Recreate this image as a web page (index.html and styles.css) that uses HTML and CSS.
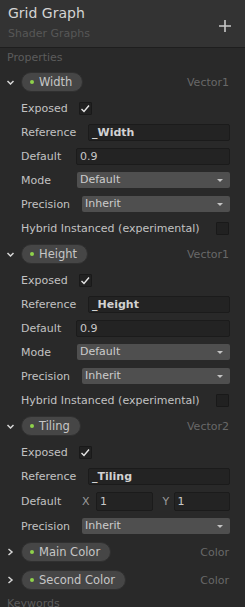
FILE: index.html
```html
<!DOCTYPE html>
<html lang="en">
<head>
  <meta charset="UTF-8">
  <meta name="viewport" content="width=device-width, initial-scale=1.0">
  <title>Grid Graph</title>
  <link rel="stylesheet" href="styles.css">
</head>
<body>
  <div class="panel">
    <header class="head">
      <div class="titles">
        <div class="title">Grid Graph</div>
        <div class="subtitle">Shader Graphs</div>
      </div>
      <svg class="add" width="12" height="12" viewBox="0 0 12 12"><path d="M6 0V12M0 6H12" stroke="#c8c8c8" stroke-width="1.6"/></svg>
    </header>

    <div class="section">Properties</div>

    <!-- Width -->
    <div class="prop">
      <div class="prop-head">
        <svg class="chev" width="8" height="5" viewBox="0 0 8 5"><path d="M1 1L4 4L7 1" fill="none" stroke="#d6d6d6" stroke-width="1.5"/></svg>
        <div class="pill"><span class="dot"></span>Width</div>
        <span class="type">Vector1</span>
      </div>
      <div class="row">
        <span class="lbl">Exposed</span>
        <span class="check on"><svg width="11" height="11" viewBox="0 0 11 11"><path d="M1.5 6L4 8.5L9 2.5" fill="none" stroke="#e6e6e6" stroke-width="1.4"/></svg></span>
      </div>
      <div class="row">
        <span class="lbl lbl-ref">Reference</span>
        <div class="field bold">_Width</div>
      </div>
      <div class="row">
        <span class="lbl lbl-def">Default</span>
        <div class="field">0.9</div>
      </div>
      <div class="row">
        <span class="lbl lbl-mode">Mode</span>
        <div class="drop">Default<span class="arrow"></span></div>
      </div>
      <div class="row">
        <span class="lbl lbl-prec">Precision</span>
        <div class="drop">Inherit<span class="arrow"></span></div>
      </div>
      <div class="row">
        <span class="lbl">Hybrid Instanced (experimental)</span>
        <span class="check end"></span>
      </div>
    </div>

    <!-- Height -->
    <div class="prop">
      <div class="prop-head">
        <svg class="chev" width="8" height="5" viewBox="0 0 8 5"><path d="M1 1L4 4L7 1" fill="none" stroke="#d6d6d6" stroke-width="1.5"/></svg>
        <div class="pill"><span class="dot"></span>Height</div>
        <span class="type">Vector1</span>
      </div>
      <div class="row">
        <span class="lbl">Exposed</span>
        <span class="check on"><svg width="11" height="11" viewBox="0 0 11 11"><path d="M1.5 6L4 8.5L9 2.5" fill="none" stroke="#e6e6e6" stroke-width="1.4"/></svg></span>
      </div>
      <div class="row">
        <span class="lbl lbl-ref">Reference</span>
        <div class="field bold">_Height</div>
      </div>
      <div class="row">
        <span class="lbl lbl-def">Default</span>
        <div class="field">0.9</div>
      </div>
      <div class="row">
        <span class="lbl lbl-mode">Mode</span>
        <div class="drop">Default<span class="arrow"></span></div>
      </div>
      <div class="row">
        <span class="lbl lbl-prec">Precision</span>
        <div class="drop">Inherit<span class="arrow"></span></div>
      </div>
      <div class="row">
        <span class="lbl">Hybrid Instanced (experimental)</span>
        <span class="check end"></span>
      </div>
    </div>

    <!-- Tiling -->
    <div class="prop">
      <div class="prop-head">
        <svg class="chev" width="8" height="5" viewBox="0 0 8 5"><path d="M1 1L4 4L7 1" fill="none" stroke="#d6d6d6" stroke-width="1.5"/></svg>
        <div class="pill"><span class="dot"></span>Tiling</div>
        <span class="type">Vector2</span>
      </div>
      <div class="row">
        <span class="lbl">Exposed</span>
        <span class="check on"><svg width="11" height="11" viewBox="0 0 11 11"><path d="M1.5 6L4 8.5L9 2.5" fill="none" stroke="#e6e6e6" stroke-width="1.4"/></svg></span>
      </div>
      <div class="row">
        <span class="lbl lbl-ref">Reference</span>
        <div class="field bold">_Tiling</div>
      </div>
      <div class="row row-tall">
        <span class="lbl lbl-vec">Default</span>
        <span class="axis">X</span>
        <div class="field field-xy">1</div>
        <span class="axis axis-y">Y</span>
        <div class="field field-xy">1</div>
      </div>
      <div class="row">
        <span class="lbl lbl-prec">Precision</span>
        <div class="drop">Inherit<span class="arrow"></span></div>
      </div>
    </div>

    <!-- collapsed -->
    <div class="prop-head">
      <svg class="chev" width="6" height="8" viewBox="0 0 6 8"><path d="M1 1L4.5 4L1 7" fill="none" stroke="#d6d6d6" stroke-width="1.5"/></svg>
      <div class="pill"><span class="dot"></span>Main Color</div>
      <span class="type">Color</span>
    </div>
    <div class="prop-head">
      <svg class="chev" width="6" height="8" viewBox="0 0 6 8"><path d="M1 1L4.5 4L1 7" fill="none" stroke="#d6d6d6" stroke-width="1.5"/></svg>
      <div class="pill"><span class="dot"></span>Second Color</div>
      <span class="type">Color</span>
    </div>

    <div class="section">Keywords</div>
  </div>
</body>
</html>
```

FILE: styles.css
```css
html, body {
  margin: 0;
  padding: 0;
  height: 607px;
  overflow: hidden;
  background-color: #292929;
}
body {
  font-family: "DejaVu Sans", sans-serif;
  font-size: 11px;
  color: #c2c2c2;
}
.panel {
  width: 245px;
}
.head {
  height: 47px;
  background-color: #333333;
  border-bottom: 1px solid #1e1e1e;
  display: flex;
  justify-content: space-between;
  box-sizing: content-box;
}
.titles {
  padding: 5px 0 0 8px;
}
.title {
  font-size: 14px;
  line-height: 16px;
  color: #d4d4d4;
}
.subtitle {
  margin-top: 6px;
  line-height: 14px;
  color: #575757;
}
.add {
  margin: 20px 14px 0 0;
}
.section {
  height: 20px;
  line-height: 20px;
  padding-left: 7px;
  color: #5c5c5c;
}
.prop-head {
  height: 28px;
  display: flex;
  align-items: center;
  padding-right: 16px;
}
.chev {
  width: 21px;
  flex: none;
}
.pill {
  height: 18px;
  border-radius: 10px;
  background-color: #464646;
  border: 1px solid #303030;
  display: flex;
  align-items: center;
  padding: 0 10px 0 8px;
  font-size: 11.5px;
  color: #c6c6c6;
}
.dot {
  width: 4px;
  height: 4px;
  border-radius: 50%;
  background-color: #8fd24b;
  margin-right: 5px;
}
.type {
  margin-left: auto;
  color: #686868;
}
.row {
  height: 24px;
  display: flex;
  align-items: center;
  padding: 0 15px 0 21px;
}
.row-tall {
  height: 26px;
}
.lbl {
  flex: none;
}
.lbl-ref { width: 67px; }
.lbl-def { width: 55px; }
.lbl-mode { width: 56px; }
.lbl-prec { width: 61px; }
.lbl-vec { width: 61px; }
.check {
  width: 11px;
  height: 11px;
  border: 1px solid #191919;
  background-color: #212121;
  border-radius: 1px;
  margin-left: 11px;
  display: flex;
}
.check.end {
  margin-left: auto;
  margin-right: 1px;
}
.field {
  flex: 1;
  height: 15px;
  line-height: 15px;
  padding-left: 3px;
  background-color: #232323;
  border: 1px solid #1b1b1b;
  border-radius: 2px;
  color: #c8c8c8;
}
.bold {
  font-weight: bold;
  color: #d2d2d2;
}
.axis {
  width: 14px;
  color: #9a9a9a;
}
.axis-y {
  width: 11px;
  margin-left: 10px;
}
.field-xy {
  height: 17px;
  line-height: 17px;
}
.drop {
  flex: 1;
  height: 16px;
  line-height: 16px;
  padding-left: 3px;
  background-color: #4f4f4f;
  border-radius: 2px;
  color: #cccccc;
  display: flex;
  align-items: center;
}
.arrow {
  margin: 0 7px 0 auto;
  width: 0;
  height: 0;
  border-left: 3px solid transparent;
  border-right: 3px solid transparent;
  border-top: 3px solid #c4c4c4;
}
```
